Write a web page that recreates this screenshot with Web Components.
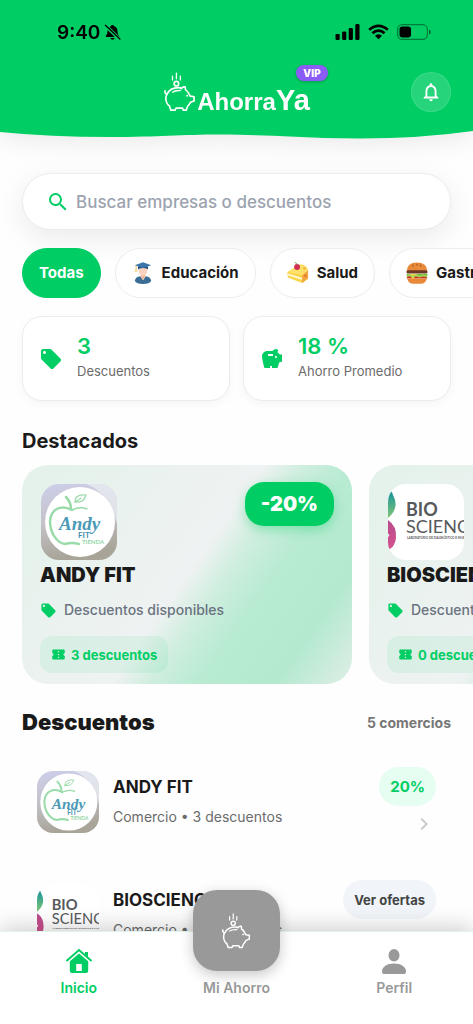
<!DOCTYPE html>
<html lang="es">
<head>
<meta charset="utf-8">
<meta name="viewport" content="width=device-width, initial-scale=1">
<title>AhorraYa</title>
<style>
  :root {
    --green: #00ce64;
    --ink: #1a1a1a;
    --grey: #6b6b6b;
    --line: #ebecee;
    --side: 22px;
  }
  body {
    margin: 0;
    background: #fefefe;
    color: var(--ink);
    font-family: Inter, "Noto Sans", sans-serif;
  }
</style>
</head>
<body>
<ahorra-app></ahorra-app>

<script>
const PIG = `
  <g fill="none" stroke="currentColor" stroke-width="5" stroke-linecap="round" stroke-linejoin="round">
    <path d="M6 60 Q5 68 12 71 M12 71 C18 57 32 50 48 50 Q54 50 57 53 Q59 47 68 48 L69 57 Q76 61 80 70 L83 76 Q88 77 95 78 V91 L84 95 Q80 103 75 108 L71 119 H62 L60 113 H40 L37 119 H24 L20 107 Q7 96 9 79 Q10 75 12 71"/>
    <path d="M29 64 Q37 58 53 59" stroke-width="4"/>
    <circle cx="41" cy="38" r="7"/>
    <path d="M41 6 V23 M29 15 V27 M53 15 V27" stroke-width="4"/>
  </g>
  <circle cx="74" cy="75" r="3" fill="currentColor"/>`;

// name: [viewBox, markup]
const icons = {
  pig: ['0 0 104 124', PIG],
  bell: ['0 0 24 24', '<path d="M12 22c1.1 0 2-.9 2-2h-4c0 1.1.9 2 2 2zm6-6v-5c0-3.07-1.63-5.64-4.5-6.32V4c0-.83-.67-1.5-1.5-1.5s-1.5.67-1.5 1.5v.68C7.64 5.36 6 7.92 6 11v5l-2 2v1h16v-1l-2-2zm-2 1H8v-6c0-2.48 1.51-4.5 4-4.5s4 2.02 4 4.5v6z"/>'],
  search: ['0 0 24 24', '<path d="M15.5 14h-.79l-.28-.27A6.47 6.47 0 0 0 16 9.5 6.5 6.5 0 1 0 9.5 16c1.61 0 3.09-.59 4.23-1.57l.27.28v.79l5 4.99L20.49 19l-4.99-5zm-6 0C7.01 14 5 11.99 5 9.5S7.01 5 9.5 5 14 7.01 14 9.5 11.99 14 9.5 14z"/>'],
  tag: ['0 0 24 24', '<path d="M21.41 11.58l-9-9C12.05 2.22 11.55 2 11 2H4c-1.1 0-2 .9-2 2v7c0 .55.22 1.05.59 1.42l9 9c.36.36.86.58 1.41.58s1.05-.22 1.41-.59l7-7c.37-.36.59-.86.59-1.41s-.23-1.06-.59-1.42zM5.5 7C4.67 7 4 6.33 4 5.5S4.67 4 5.5 4 7 4.67 7 5.5 6.33 7 5.5 7z"/>'],
  savings: ['0 0 24 24', '<path d="M19.83 7.5l-2.27-2.27c.07-.42.18-.81.32-1.15.08-.18.12-.37.12-.58C18 2.67 17.33 2 16.5 2c-1.64 0-3.09.79-4 2h-5C4.46 4 2 6.46 2 9.5S4.5 21 4.5 21H10v-2h2v2h5.5l1.68-5.59L22 14.47V7.5h-2.17zM13 9H8V7h5v2zm3 2c-.55 0-1-.45-1-1s.45-1 1-1 1 .45 1 1-.45 1-1 1z"/>'],
  ticket: ['0 0 24 24', '<path d="M22 10V6c0-1.11-.9-2-2-2H4c-1.1 0-1.99.89-1.99 2v4c1.1 0 1.99.9 1.99 2s-.89 2-2 2v4c0 1.1.9 2 2 2h16c1.1 0 2-.9 2-2v-4c-1.1 0-2-.9-2-2s.9-2 2-2zm-9 7.5h-2v-2h2v2zm0-4.5h-2v-2h2v2zm0-4.5h-2v-2h2v2z"/>'],
  chevron: ['0 0 24 24', '<path d="M10 6L8.59 7.41 13.17 12l-4.58 4.59L10 18l6-6z"/>'],
  home: ['0 0 28 28', '<path d="M14 6.5 4.8 14.3V24q0 2 2 2h14.4q2 0 2-2V14.3z"/><path d="M2 13.4 14 3l12 10.4" fill="none" stroke="currentColor" stroke-width="2" stroke-linecap="round"/><path d="M20 5h3v5.5l-3-2.6z"/><path d="M11.2 17h5.6v7h-5.6z" fill="#fff"/>'],
  person: ['0 0 28 28', '<ellipse cx="14" cy="8.3" rx="5.5" ry="6.2"/><path d="M2 24.500C2 20 7 16.500 14 16.500S26 20 26 24.500Q26 27 24 27H4Q2 27 2 24.500Z"/>'],
  muted: ['0 0 24 24', '<path d="M12 2q2 0 2.300 2C18 5 19 8 19 11q0 4 2.500 6.500V19h-19v-1.500Q5 15 5 11c0-3 1-6 4.700-7Q10 2 12 2ZM9 20.500h6q-.5 2.500-3 2.500t-3-2.500Z"/><path d="M1.500 2.500 22.500 22.500" stroke="#00ce64" stroke-width="5"/><path d="M2 2.500 22.500 22" stroke="currentColor" stroke-width="1.800" stroke-linecap="round"/>'],
  signal: ['0 0 24 16', '<rect y="10" width="4.200" height="6" rx="1.300"/><rect x="6.600" y="7.500" width="4.200" height="8.500" rx="1.300"/><rect x="13.200" y="4" width="4.200" height="12" rx="1.300"/><rect x="19.800" width="4.200" height="16" rx="1.300"/>'],
  wifi: ['0 0 22 16', '<g fill="none" stroke="currentColor" stroke-width="2.900"><path d="M1.300 5.800Q5.500 1.500 11 1.500T20.700 5.800"/><path d="M4.700 9.300Q7.500 6.500 11 6.500T17.300 9.300"/></g><path d="M7.300 12Q9 10.300 11 10.300T14.700 12L11 15.700Z"/>'],
  battery: ['0 0 34 16', '<rect x=".6" y=".6" width="29.800" height="14.800" rx="4.600" fill="none" stroke="currentColor" stroke-width="1.200" opacity=".4"/><rect x="2.500" y="2.500" width="11.500" height="11" rx="3"/><path d="M32 5.500q1.800.5 1.800 2.500T32 10.500Z" opacity=".5"/>'],
  student: ['0 0 24 24', '<path d="M3 20.500Q4 16 9 15.500L12 20l3-4.500q5 .5 6 5Q19 24 12 24T3 20.500Z" fill="#3a6c96"/><path d="M9.500 13h5v3L12 20l-2.500-4Z" fill="#f0b898"/><ellipse cx="12" cy="9.500" rx="4.700" ry="5.500" fill="#fad2bd"/><path d="M6.500 4.500v4q1-2 5.500-2t5.500 2v-4Z" fill="#244f79"/><path d="M3 3.500 12 .3l9 3.200-9 3Z" fill="#3a75aa"/><path d="M4.500 4v4" stroke="#eabf4a"/><path d="M3.500 7.500h2l.7 3.500H2.700Z" fill="#f5dda0"/>'],
  cake: ['0 0 24 24', '<path d="M.5 11 15 2.500Q23 4 23 10.500V18L16.500 23 .8 17Z" fill="#f9d648"/><path d="M16.500 14 23 8.500V18l-6.500 5Z" fill="#f3a53d"/><path d="M.5 11 13 3l7 2 3 4-6.500 5.500Z" fill="#ffe06b"/><path d="M.7 13.500 16.500 18.500" stroke="#fff6dc" stroke-width="2"/><circle cx="19" cy="7" r="1.400" fill="#eeb33d"/><circle cx="20" cy="15" r="1.500" fill="#dd7f31"/><circle cx="11" cy="5.500" r="3.200" fill="#d42d55"/><path d="M11 3Q11 1 8.500.5" fill="none" stroke="#63a34c"/>'],
  burger: ['0 0 24 24', '<path d="M.7 10Q1 .5 12 .5T23.300 10Z" fill="#e98a3a"/><path d="M7.500 3v2M12 2v2M16 3v2" stroke="#8c4c20"/><rect x=".5" y="9" width="23" height="3.500" rx="1.700" fill="#6e3826"/><path d="M.7 13h22.600v2.500H.7Z" fill="#6fbf3b"/><path d="M1 15.500h22V18H1Z" fill="#c5382d"/><path d="M4 13h9l-4 2v4H6v-4Z" fill="#f6d34c"/><path d="M1 15.500l3-1.500 3 2 4-1.500 4 1.500 4-1.500 4 1.500" fill="none" stroke="#a4d94f" stroke-width="1.500"/><path d="M1.300 18h21.400Q21.500 23.700 16 23.700H8Q2.500 23.700 1.300 18Z" fill="#e98a3a"/>']
};

function make(html) {
  const template = document.createElement('template');
  template.innerHTML = html;
  return template;
}

class AppIcon extends HTMLElement {
  static observedAttributes = ['name'];
  constructor() {
    super();
    this.attachShadow({ mode: 'open' });
  }
  attributeChangedCallback() {
    const [box, body] = icons[this.getAttribute('name')];
    this.shadowRoot.innerHTML = `
      <style>
        :host { display: block; flex: none; width: 24px; height: 24px; }
        svg { display: block; width: 100%; height: 100%; fill: currentColor; }
      </style>
      <svg viewBox="${box}" aria-hidden="true">${body}</svg>`;
  }
}
customElements.define('app-icon', AppIcon);

// SHOP LOGOS
const logos = {
  andy: `
    <defs><linearGradient id="bg" x1="0" y1="0" x2=".2" y2="1">
      <stop offset="0" stop-color="#cdcfeb"/><stop offset=".5" stop-color="#c4c2c9"/><stop offset="1" stop-color="#a8a498"/>
    </linearGradient></defs>
    <rect width="76" height="76" fill="url(#bg)"/>
    <path d="M45 0H76V40Q67 8 45 0Z" fill="#edf1f5" opacity=".7"/>
    <circle cx="39" cy="38" r="35" fill="#fff"/>
    <g fill="none" stroke="#9adbaa" stroke-linecap="round">
      <path d="M31 26C20 20 10 25 9 37C9 49 16 59 24 60Q31 58 38 60" stroke-width="2.500"/>
      <path d="M31 26Q39 22 46 25" stroke-width="1.500"/>
      <path d="M30 25Q30 18 25 13" stroke-width="2.500"/>
      <path d="M34 18Q34 10 45 11Q43 19 34 18L40 14" stroke-width="1.200"/>
    </g>
    <g font-family="Liberation Serif, serif" font-style="italic" font-weight="bold">
      <text x="18" y="46" font-size="19" fill="#4b9ab6">Andy</text>
    </g>
    <g font-family="Lato, sans-serif" font-weight="bold">
      <text x="37" y="54" font-size="8" fill="#3f8fae">FIT</text>
      <text x="41" y="60" font-size="6" fill="#93d6a5">TIENDA</text>
    </g>`,
  bio: `
    <defs>
      <linearGradient id="top" x1="0" y1="0" x2="0" y2="1"><stop offset="0" stop-color="#17939b"/><stop offset="1" stop-color="#82c577"/></linearGradient>
      <linearGradient id="low" x1="0" y1="0" x2="0" y2="1"><stop offset="0" stop-color="#ba4b8e"/><stop offset="1" stop-color="#d4538c"/></linearGradient>
    </defs>
    <rect width="76" height="76" fill="#fff"/>
    <path d="M0 10Q3 4 5 11Q12 24 0 34Z" fill="url(#top)"/>
    <path d="M0 36Q9 42 8 54Q7 63 0 66V53q2-1 1-3H0Z" fill="url(#low)"/>
    <g font-family="Lato, sans-serif" fill="#58595b">
      <text x="18" y="32" font-size="18" font-weight="bold">BIO</text>
      <text x="18" y="49" font-size="18">SCIENCE</text>
      <text x="19" y="55" font-size="3" font-weight="bold">LABORATORIO DE DIAGNÓSTICO E INVESTIGACIÓN</text>
    </g>`
};

class ShopLogo extends HTMLElement {
  static observedAttributes = ['shop'];
  constructor() {
    super();
    this.attachShadow({ mode: 'open' });
  }
  attributeChangedCallback() {
    this.shadowRoot.innerHTML = `
      <style>
        :host { display: block; flex: none; overflow: hidden; border-radius: 18px; }
        svg { display: block; width: 100%; height: 100%; }
      </style>
      <svg viewBox="0 0 76 76">${logos[this.getAttribute('shop')]}</svg>`;
  }
}
customElements.define('shop-logo', ShopLogo);

// HEADER
const headerTemplate = make(`
<style>
  :host { display: block; flex: none; filter: drop-shadow(0 6px 12px rgba(0, 0, 0, .08)); }
  .top { background: var(--green); }
  .status {
    display: flex;
    align-items: center;
    justify-content: space-between;
    height: 64px;
    padding: 0 42px 0 57px;
    color: #000;
    font-size: 19px;
    font-weight: 600;
  }
  .status div { display: flex; align-items: center; gap: 4px; }
  .status .right { gap: 8px; }
  .muted { width: 17px; height: 18px; }
  .signal { width: 25px; height: 16px; }
  .wifi { width: 21px; height: 16px; }
  .battery { width: 34px; height: 16px; }
  .bar {
    display: grid;
    grid-template-columns: 1fr auto 1fr;
    align-items: center;
    padding: 7px var(--side) 18px;
    color: #fff;
  }
  .brand {
    grid-column: 2;
    position: relative;
    display: flex;
    align-items: flex-end;
    font: bold 24px/20px "Liberation Sans", sans-serif;
  }
  .brand .pig { width: 34px; height: 41px; }
  .brand big { font-size: 29px; }
  .brand sup {
    position: absolute;
    top: -6px;
    right: -18px;
    padding: 0 7px;
    border-radius: 8px;
    background: #8b5cf6;
    box-shadow: 0 1px 3px rgba(0, 0, 0, .25);
    font: 900 10px/16px Inter, sans-serif;
  }
  button {
    justify-self: end;
    display: grid;
    place-items: center;
    width: 40px;
    height: 40px;
    padding: 0;
    border: 1px solid rgba(255, 255, 255, .1);
    border-radius: 50%;
    background: rgba(255, 255, 255, .15);
    color: #fff;
  }
  button app-icon { width: 22px; height: 22px; }
  .wave { display: block; width: 100%; height: 10px; fill: var(--green); }
</style>
<div class="top">
  <div class="status">
    <div><span>9:40</span><app-icon class="muted" name="muted"></app-icon></div>
    <div class="right">
      <app-icon class="signal" name="signal"></app-icon>
      <app-icon class="wifi" name="wifi"></app-icon>
      <app-icon class="battery" name="battery"></app-icon>
    </div>
  </div>
  <div class="bar">
    <div class="brand"><app-icon class="pig" name="pig"></app-icon><span>Ahorra<big>Ya</big></span><sup>VIP</sup></div>
    <button aria-label="Notificaciones"><app-icon name="bell"></app-icon></button>
  </div>
</div>
<svg class="wave" viewBox="0 0 473 10" preserveAspectRatio="none"><path d="M0 -1V2Q50 7 110 7C160 7 180 4.500 220 4.500C270 4.500 310 8.500 360 8.500Q420 8.500 473 1V-1Z"/></svg>
`);
class AppHeader extends HTMLElement {
  constructor() {
    super();
    this.attachShadow({ mode: 'open' });
    this.shadowRoot.appendChild(headerTemplate.content.cloneNode(true));
  }
}
customElements.define('app-header', AppHeader);

// SEARCH
const searchTemplate = make(`
<style>
  :host { display: block; }
  label {
    display: flex;
    align-items: center;
    gap: 6px;
    height: 55px;
    padding: 0 23px;
    border: 1px solid var(--line);
    border-radius: 29px;
    background: #fff;
    box-shadow: 0 8px 28px rgba(0, 0, 0, .08);
    color: var(--green);
  }
  input {
    flex: 1;
    min-width: 0;
    padding: 0;
    border: 0;
    outline: 0;
    background: none;
    color: var(--ink);
    font: 500 17px/24px Inter, sans-serif;
  }
  input::placeholder { color: #9ca3af; opacity: 1; }
</style>
<label><app-icon name="search"></app-icon><input type="search" aria-label="Buscar" placeholder="Buscar empresas o descuentos"></label>
`);
class SearchBox extends HTMLElement {
  constructor() {
    super();
    this.attachShadow({ mode: 'open' });
    this.shadowRoot.appendChild(searchTemplate.content.cloneNode(true));
  }
}
customElements.define('search-box', SearchBox);

// CATEGORY CHIP
const chipTemplate = make(`
<style>
  :host { display: block; flex: none; }
  button {
    display: flex;
    align-items: center;
    gap: 8px;
    height: 50px;
    padding: 0 16px;
    border: 1px solid var(--line);
    border-radius: 25px;
    background: #fff;
    color: var(--ink);
    font: 700 15px/20px Inter, sans-serif;
  }
  ::slotted(app-icon) { width: 22px; height: 22px; }
  :host([active]) button { border-color: var(--green); background: var(--green); color: #fff; }
</style>
<button><slot name="icon"></slot><slot></slot></button>
`);
class CategoryChip extends HTMLElement {
  constructor() {
    super();
    this.attachShadow({ mode: 'open' });
    this.shadowRoot.appendChild(chipTemplate.content.cloneNode(true));
  }
}
customElements.define('category-chip', CategoryChip);

// STAT BOX
const statTemplate = make(`
<style>
  :host {
    display: flex;
    align-items: center;
    gap: 14px;
    flex: 1;
    padding: 16px;
    border: 1px solid var(--line);
    border-radius: 20px;
    background: #fff;
    box-shadow: 0 3px 10px rgba(0, 0, 0, .04);
    color: var(--green);
  }
  b { display: block; font-size: 22px; line-height: 26px; font-weight: 600; }
  span { display: block; padding: 2px 0 3px; color: var(--grey); font-size: 13px; line-height: 20px; }
</style>
<app-icon></app-icon>
<div><b></b><span><slot></slot></span></div>
`);
class StatBox extends HTMLElement {
  constructor() {
    super();
    this.attachShadow({ mode: 'open' });
    this.shadowRoot.appendChild(statTemplate.content.cloneNode(true));
    this.shadowRoot.querySelector('b').textContent = this.getAttribute('value');
    this.shadowRoot.querySelector('app-icon').setAttribute('name', this.getAttribute('icon'));
  }
}
customElements.define('stat-box', StatBox);

// FEATURED CARD
const featuredTemplate = make(`
<style>
  :host {
    position: relative;
    display: flex;
    flex-direction: column;
    align-items: flex-start;
    flex: none;
    box-sizing: border-box;
    width: 330px;
    padding: 19px 18px 11px;
    border-radius: 26px;
    background: linear-gradient(125deg, #e3f2ea 0%, #eff2f2 50%, #d0eedf 58%, #b8ebd2 68%, #b4e9cf 84%, #e0eee7 100%);
  }
  shop-logo { width: 76px; height: 76px; margin: 0 1px; }
  h3 { margin: 1px 0 11px; font-size: 20px; line-height: 28px; font-weight: 900; white-space: nowrap; }
  p {
    display: flex;
    align-items: center;
    gap: 7px;
    margin: 0 0 16px;
    color: #6b7280;
    font-size: 14px;
    line-height: 20px;
    font-weight: 500;
    white-space: nowrap;
  }
  p app-icon { width: 17px; height: 17px; color: var(--green); }
  .count {
    display: flex;
    align-items: center;
    gap: 5px;
    height: 37px;
    padding: 0 11px;
    border-radius: 12px;
    background: rgba(0, 206, 100, .08);
    color: var(--green);
    font-size: 13px;
    font-weight: 700;
  }
  .count app-icon { width: 15px; height: 15px; }
  .off {
    position: absolute;
    top: 17px;
    right: 18px;
    padding: 0 16px;
    border-radius: 19px;
    background: var(--green);
    box-shadow: 0 4px 12px rgba(0, 206, 100, .35);
    color: #fff;
    font-size: 20px;
    line-height: 44px;
    font-weight: 900;
  }
  .off:empty { display: none; }
</style>
<shop-logo></shop-logo>
<h3></h3>
<p><app-icon name="tag"></app-icon>Descuentos disponibles</p>
<div class="count"><app-icon name="ticket"></app-icon><span></span></div>
<div class="off"></div>
`);
class FeaturedCard extends HTMLElement {
  constructor() {
    super();
    this.attachShadow({ mode: 'open' });
    this.shadowRoot.appendChild(featuredTemplate.content.cloneNode(true));
    this.shadowRoot.querySelector('shop-logo').setAttribute('shop', this.getAttribute('shop'));
    this.shadowRoot.querySelector('h3').textContent = this.getAttribute('name');
    this.shadowRoot.querySelector('.count span').textContent = this.getAttribute('count') + ' descuentos';
    this.shadowRoot.querySelector('.off').textContent = this.getAttribute('off') || '';
  }
}
customElements.define('featured-card', FeaturedCard);

// SHOP ROW
const rowTemplate = make(`
<style>
  :host { display: flex; align-items: center; gap: 14px; padding: 0 15px; }
  shop-logo { width: 62px; height: 62px; border-radius: 16px; }
  .info { flex: 1; min-width: 0; padding-bottom: 2px; white-space: nowrap; }
  h3 { margin: 0 0 8px; font-size: 17px; line-height: 24px; font-weight: 700; }
  p { margin: 0; color: var(--grey); font-size: 14px; line-height: 20px; }
  .side { display: flex; flex-direction: column; align-items: flex-end; gap: 6px; }
  button {
    height: 39px;
    padding: 0 11px;
    border: 0;
    border-radius: 20px;
    background: #f1f4f9;
    color: #444;
    font: 700 13px/20px Inter, sans-serif;
  }
  :host([hot]) button { background: #e6fdf1; color: var(--green); font-size: 15px; }
  .side app-icon { width: 24px; height: 24px; color: #c9ccd2; }
</style>
<shop-logo></shop-logo>
<div class="info"><h3></h3><p></p></div>
<div class="side"><button><slot></slot></button><app-icon name="chevron"></app-icon></div>
`);
class ShopRow extends HTMLElement {
  constructor() {
    super();
    this.attachShadow({ mode: 'open' });
    this.shadowRoot.appendChild(rowTemplate.content.cloneNode(true));
    this.shadowRoot.querySelector('shop-logo').setAttribute('shop', this.getAttribute('shop'));
    this.shadowRoot.querySelector('h3').textContent = this.getAttribute('name');
    this.shadowRoot.querySelector('p').textContent = 'Comercio • ' + this.getAttribute('count') + ' descuentos';
  }
}
customElements.define('shop-row', ShopRow);

// BOTTOM NAV
const navTemplate = make(`
<style>
  :host {
    position: relative;
    z-index: 1;
    display: block;
    flex: none;
    border-top: 1px solid #dff5ea;
    background: #fff;
    box-shadow: 0 -4px 20px rgba(0, 0, 0, .18);
  }
  nav { display: grid; grid-template-columns: repeat(3, 1fr); align-items: end; padding-bottom: 27px; }
  a {
    display: flex;
    flex-direction: column;
    align-items: center;
    gap: 4px;
    color: #999;
    font-size: 14px;
    line-height: 18px;
    font-weight: 600;
    text-decoration: none;
  }
  a[aria-current] { color: var(--green); }
  a > app-icon { width: 28px; height: 28px; }
  .fab {
    display: grid;
    place-items: center;
    width: 87px;
    height: 81px;
    margin: -42px 0 4px;
    border-radius: 24px;
    background: #999;
    box-shadow: 0 4px 14px rgba(0, 0, 0, .22);
    color: #fff;
  }
  .fab app-icon { width: 31px; height: 37px; }
</style>
<nav>
  <a href="#inicio" aria-current="page"><app-icon name="home"></app-icon><span>Inicio</span></a>
  <a href="#ahorro"><div class="fab"><app-icon name="pig"></app-icon></div><span>Mi Ahorro</span></a>
  <a href="#perfil"><app-icon name="person"></app-icon><span>Perfil</span></a>
</nav>
`);
class BottomNav extends HTMLElement {
  constructor() {
    super();
    this.attachShadow({ mode: 'open' });
    this.shadowRoot.appendChild(navTemplate.content.cloneNode(true));
  }
}
customElements.define('bottom-nav', BottomNav);

// APP
const appTemplate = make(`
<style>
  :host { display: flex; flex-direction: column; height: 100vh; }
  main { flex: 1; min-height: 0; overflow: hidden auto; scrollbar-width: none; padding: 33px var(--side); }
  .scroll {
    display: flex;
    overflow-x: auto;
    scrollbar-width: none;
    margin: 0 calc(-1 * var(--side));
    padding: 0 var(--side);
  }
  .chips { gap: 14px; margin-top: 18px; margin-bottom: 18px; }
  .stats { display: flex; gap: 13px; }
  .cards { gap: 17px; }
  h2 { margin: 28px 0 12px; font-size: 20px; line-height: 24px; font-weight: 700; }
  .title { display: flex; align-items: center; justify-content: space-between; margin: 24px 0 31px; }
  .title h2 { margin: 0; font-size: 22px; line-height: 28px; font-weight: 900; }
  .title span { color: #777; font-size: 14px; font-weight: 700; }
  .rows { display: grid; gap: 44px; }
</style>
<app-header></app-header>
<main>
  <search-box></search-box>
  <div class="scroll chips">
    <category-chip active>Todas</category-chip>
    <category-chip><app-icon slot="icon" name="student"></app-icon>Educación</category-chip>
    <category-chip><app-icon slot="icon" name="cake"></app-icon>Salud</category-chip>
    <category-chip><app-icon slot="icon" name="burger"></app-icon>Gastronomía</category-chip>
  </div>
  <div class="stats">
    <stat-box icon="tag" value="3">Descuentos</stat-box>
    <stat-box icon="savings" value="18 %">Ahorro Promedio</stat-box>
  </div>
  <h2>Destacados</h2>
  <div class="scroll cards">
    <featured-card shop="andy" name="ANDY FIT" count="3" off="-20%"></featured-card>
    <featured-card shop="bio" name="BIOSCIENCE" count="0"></featured-card>
  </div>
  <div class="title"><h2>Descuentos</h2><span>5 comercios</span></div>
  <div class="rows">
    <shop-row hot shop="andy" name="ANDY FIT" count="3">20%</shop-row>
    <shop-row shop="bio" name="BIOSCIENCE" count="0">Ver ofertas</shop-row>
  </div>
</main>
<bottom-nav></bottom-nav>
`);
class AhorraApp extends HTMLElement {
  constructor() {
    super();
    this.attachShadow({ mode: 'open' });
    this.shadowRoot.appendChild(appTemplate.content.cloneNode(true));
  }
}
customElements.define('ahorra-app', AhorraApp);
</script>
</body>
</html>
